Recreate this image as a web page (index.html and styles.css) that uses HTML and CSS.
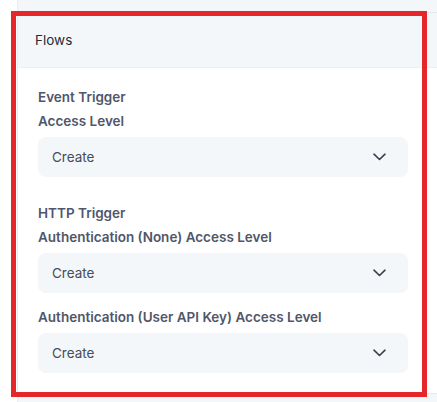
FILE: index.html
```html
<!DOCTYPE html>
<html lang="en">
<head>
<meta charset="utf-8">
<title>Flows</title>
<link rel="stylesheet" href="styles.css">
</head>
<body>
<div class="page">
  <aside class="sidebar"></aside>
  <main class="main">
    <section class="card">
      <header class="card-header">Flows</header>
      <div class="card-body">
        <div class="group">
          <div class="group-title">Event Trigger</div>
          <div class="field">
            <label class="field-label">Access Level</label>
            <div class="select"><span>Create</span><svg class="chev" width="13" height="8" viewBox="0 0 13 8"><path d="M1 1.2 L6.5 6.5 L12 1.2" fill="none" stroke="#3b404c" stroke-width="1.6" stroke-linecap="round" stroke-linejoin="round"/></svg></div>
          </div>
        </div>
        <div class="group">
          <div class="group-title">HTTP Trigger</div>
          <div class="field">
            <label class="field-label">Authentication (None) Access Level</label>
            <div class="select"><span>Create</span><svg class="chev" width="13" height="8" viewBox="0 0 13 8"><path d="M1 1.2 L6.5 6.5 L12 1.2" fill="none" stroke="#3b404c" stroke-width="1.6" stroke-linecap="round" stroke-linejoin="round"/></svg></div>
          </div>
          <div class="field">
            <label class="field-label">Authentication (User API Key) Access Level</label>
            <div class="select"><span>Create</span><svg class="chev" width="13" height="8" viewBox="0 0 13 8"><path d="M1 1.2 L6.5 6.5 L12 1.2" fill="none" stroke="#3b404c" stroke-width="1.6" stroke-linecap="round" stroke-linejoin="round"/></svg></div>
          </div>
        </div>
      </div>
    </section>
  </main>
</div>
<div class="highlight"></div>
</body>
</html>
```
FILE: styles.css
```css
html, body {
  margin: 0;
  padding: 0;
  height: 100%;
  overflow: hidden;
  background: #ffffff;
  font-family: Inter, "Noto Sans", sans-serif;
}
.page {
  display: flex;
  height: 100%;
}
.sidebar {
  width: 17px;
  flex: none;
  background: #ffffff;
  border-right: 1px solid #e9edf2;
}
.main {
  flex: 1;
  min-width: 0;
  background: #f4f7fa;
  padding-top: 12px;
}
.card {
  background: #ffffff;
  border-top: 1px solid #e6eaef;
  border-bottom: 1px solid #e6eaef;
}
.card-header {
  height: 54px;
  display: flex;
  align-items: center;
  padding-left: 17px;
  background: #f4f7fa;
  border-bottom: 1px solid #eceff3;
  font-size: 13.5px;
  color: #272b37;
}
.card-body {
  padding: 17px 29px 20px 20px;
  display: flex;
  flex-direction: column;
  gap: 24px;
}
.group {
  display: flex;
  flex-direction: column;
  gap: 12px;
}
.group-title, .field-label {
  display: block;
  font-size: 13.5px;
  font-weight: 600;
  line-height: 24px;
  color: #50566b;
}
.group-title {
  margin-bottom: -12px;
}
.field {
  display: flex;
  flex-direction: column;
  gap: 4px;
}
.select {
  height: 40px;
  border-radius: 8px;
  background: #f4f7fa;
  display: flex;
  align-items: center;
  justify-content: space-between;
  padding: 0 22px 0 14px;
  font-size: 13.5px;
  color: #474c5a;
}
.chev {
  display: block;
}
.highlight {
  position: absolute;
  left: 11px;
  top: 11px;
  width: 406px;
  height: 376px;
  border: 5px solid #e5262a;
  pointer-events: none;
}
```
